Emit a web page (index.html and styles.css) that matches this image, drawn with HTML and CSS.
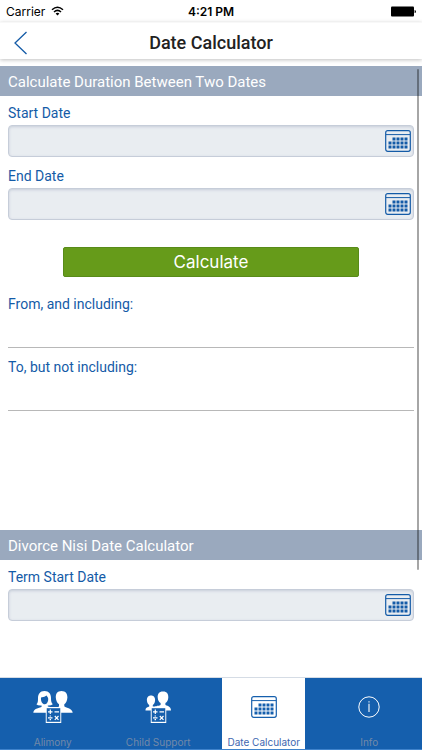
FILE: index.html
```html
<!DOCTYPE html>
<html lang="en">
<head>
    <meta charset="utf-8">
    <meta name="viewport" content="width=device-width, initial-scale=1">
    <title>Date Calculator</title>
    <link rel="stylesheet" href="styles.css">
</head>
<body>
    <!-- shared icons -->
    <svg class="sprite" aria-hidden="true">
        <symbol id="calendar" viewBox="0 0 26 22">
            <rect x="0.7" y="0.7" width="24.6" height="20.6" rx="2" fill="none" stroke="currentColor" stroke-width="1.2"/>
            <path d="M1 4.6H25" stroke="currentColor" stroke-width="1"/>
            <path d="M7.5 9H23M3.5 13H23M3.5 17H23" stroke="currentColor" stroke-width="3" stroke-dasharray="3 1"/>
        </symbol>
        <symbol id="calc" viewBox="0 0 16 16">
            <rect x="0.6" y="0.6" width="14.8" height="14.8" fill="#155fad" stroke="#fff" stroke-width="1.2"/>
            <path d="M2.5 4.8H7M4.8 2.5V7M9 4.8H13.5M2.5 10.8H7M9.3 9L13 12.8M13 9L9.3 12.8" fill="none" stroke="#fff" stroke-width="1.2"/>
            <path d="M4.1 8.4H5.5V9.6H4.1ZM4.1 12H5.5V13.2H4.1Z" fill="#fff"/>
        </symbol>
    </svg>

    <div class="app">
        <div class="status">
            <div class="carrier">
                Carrier
                <svg width="13" height="10" viewBox="0 0 13 10" aria-hidden="true">
                    <path d="M1 3.8Q6.5 -1.4 12 3.8M3 6Q6.5 2.8 10 6" fill="none" stroke="#000" stroke-width="1.5"/>
                    <path d="M4.6 7.5Q6.5 5.9 8.4 7.5L6.5 9.6Z"/>
                </svg>
            </div>
            <div class="time">4:21 PM</div>
            <svg class="battery" width="25" height="11" viewBox="0 0 25 11" aria-hidden="true">
                <rect x="0" y="0.5" width="23" height="10" rx="1"/>
                <path d="M23.6 4Q25 4 25 5.5Q25 7 23.6 7Z"/>
            </svg>
        </div>

        <header class="header">
            <button class="back" type="button" aria-label="Back">
                <svg width="14" height="24" viewBox="0 0 14 24" aria-hidden="true">
                    <path d="M12.5 1L1 12L12.5 23" fill="none" stroke="currentColor" stroke-width="1.3"/>
                </svg>
            </button>
            <h1>Date Calculator</h1>
        </header>

        <main class="content">
            <form class="duration">
                <h2>Calculate Duration Between Two Dates</h2>
                <div class="field">
                    <label for="startDate">Start Date</label>
                    <div class="date-box">
                        <input type="text" id="startDate" name="startDate">
                        <svg class="calendar"><use href="#calendar"/></svg>
                    </div>
                </div>
                <div class="field">
                    <label for="endDate">End Date</label>
                    <div class="date-box">
                        <input type="text" id="endDate" name="endDate">
                        <svg class="calendar"><use href="#calendar"/></svg>
                    </div>
                </div>
                <button class="calculate" type="button">Calculate</button>
                <div class="field">
                    <label for="fromResult">From, and including:</label>
                    <input class="result" type="text" id="fromResult" readonly>
                </div>
                <div class="field">
                    <label for="toResult">To, but not including:</label>
                    <input class="result" type="text" id="toResult" readonly>
                </div>
            </form>

            <form class="nisi">
                <h2>Divorce Nisi Date Calculator</h2>
                <div class="field">
                    <label for="termDate">Term Start Date</label>
                    <div class="date-box">
                        <input type="text" id="termDate" name="termDate">
                        <svg class="calendar"><use href="#calendar"/></svg>
                    </div>
                </div>
            </form>
            <div class="scrollbar"></div>
        </main>

        <nav class="tabs">
            <a class="tab" href="#alimony">
                <svg width="40" height="34" viewBox="0 0 40 34" aria-hidden="true">
                    <path fill="#fff" fill-rule="evenodd" d="M11.5 1C6.8 1 5 4.5 5 8C5 11 5 13 3.4 14.2Q5 15.8 8.6 15.4V16.8C7.5 18.2 0.5 18 0.3 22.8H22V18L14.8 16.6V15.4Q18 15.6 19.8 14.2C18.2 12.6 18 11 18 8C18 4 16 1 11.5 1ZM8 7.4Q12 7 13.6 5.4Q15.4 7.4 15.2 10C14.8 12.8 13.4 14.2 11.7 14.2C9.6 14.2 7.6 11.5 8 7.4Z"/>
                    <path fill="#fff" d="M28.5 1C24.4 1 22.6 3.8 22.8 7.5C23 11 24.3 13 26 14.2V16.2C25.4 17.8 21 17.4 18.5 19V22.8H39.7C39.4 17.8 32 18 31.3 16.2V14.2C33 13 34.2 11 34.4 7.5C34.5 3.8 32.6 1 28.5 1Z"/>
                    <use href="#calc" x="12.5" y="17" width="16" height="16"/>
                </svg>
                <span>Alimony</span>
            </a>
            <a class="tab" href="#child-support">
                <svg width="40" height="34" viewBox="0 0 40 34" aria-hidden="true">
                    <path fill="#fff" d="M13 5.5C10 5.5 8.7 7.7 8.9 10.3C9.1 12.8 9.9 14 11.2 15V16.5C10 17.5 7.5 17 7.5 20.6H18V16.5H14.8V15C16.1 14 16.9 12.8 17.1 10.3C17.2 7.7 16 5.5 13 5.5Z"/>
                    <path fill="#fff" d="M25 1.5C20.8 1.5 19.5 4.2 19.7 7.5C19.9 10.5 21 12 22.6 13V14.8C22 16 17 15.5 16 18V20.6H33C33 15.8 28.2 16 27.4 14.8V13C29 12 30.1 10.5 30.3 7.5C30.5 4.2 29.2 1.5 25 1.5Z"/>
                    <use href="#calc" x="12.5" y="17" width="16" height="16"/>
                </svg>
                <span>Child Support</span>
            </a>
            <a class="tab active" href="#date-calculator" aria-current="page">
                <svg class="calendar" aria-hidden="true"><use href="#calendar"/></svg>
                <span>Date Calculator</span>
            </a>
            <a class="tab" href="#info">
                <svg width="22" height="22" viewBox="0 0 22 22" aria-hidden="true">
                    <circle cx="11" cy="11" r="10.2" fill="none" stroke="#fff" stroke-width="1"/>
                    <path d="M11 7.8V16M11 5.2V6.6" stroke="#fff" stroke-width="1.1"/>
                </svg>
                <span>Info</span>
            </a>
        </nav>
    </div>
</body>
</html>
```

FILE: styles.css
```css
* {
    box-sizing: border-box;
}
body {
    margin: 0;
    font-family: Roboto, Arial, sans-serif;
    color: #145ba7;
    background: #fff;
}
h1, h2 {
    margin: 0;
}
button, input {
    font-family: inherit;
}
.sprite {
    display: none;
}
.app {
    min-height: 100vh;
    display: flex;
    flex-direction: column;
}

/* status bar */
.status {
    height: 22px;
    padding: 0 6px;
    display: grid;
    grid-template-columns: 1fr auto 1fr;
    align-items: center;
    font-family: Inter, Arial, sans-serif;
    font-size: 12px;
    color: #000;
}
.carrier {
    display: flex;
    align-items: center;
    gap: 6px;
}
.time {
    font-weight: 600;
}
.battery {
    justify-self: end;
}

/* title bar */
.header {
    height: 37px;
    padding: 0 14px;
    display: grid;
    grid-template-columns: 1fr auto 1fr;
    align-items: center;
    border-top: 1px solid #f8f8f8;
    box-shadow: 0 1px 4px rgba(0, 0, 0, 0.25);
}
.header h1 {
    font-size: 18px;
    font-weight: 500;
    line-height: 24px;
    padding-top: 4px;
    color: #222;
}
.back {
    justify-self: start;
    display: flex;
    padding: 4px 0 0;
    border: 0;
    background: none;
    color: #145ba7;
}

.content {
    flex: 1;
    position: relative;
    padding-top: 7px;
}
.content h2 {
    height: 30px;
    padding: 0 8px;
    font-size: 15px;
    font-weight: 400;
    line-height: 32px;
    color: #fff;
    background: #9aa9be;
}
.duration {
    min-height: 464px;
    display: flex;
    flex-direction: column;
}
.field {
    display: flex;
    flex-direction: column;
    gap: 3px;
    padding: 8px 8px 2px;
}
.field label {
    font-size: 14px;
    line-height: 18px;
}
.date-box {
    height: 32px;
    display: flex;
    align-items: center;
    padding-right: 2px;
    border: 1px solid #c6cdd9;
    border-radius: 4px;
    background: #e9edf1;
    box-shadow: inset 0 1px 3px #c6cdd9;
}
.date-box input {
    flex: 1;
    min-width: 0;
    height: 30px;
    padding: 0 8px;
    border: 0;
    background: none;
    font-size: 14px;
}
.calendar {
    width: 26px;
    height: 22px;
}
.calculate {
    width: 70%;
    height: 30px;
    margin: 25px auto 10px;
    border: 1px solid #588b19;
    border-radius: 2px;
    background: #669b1a;
    color: #fff;
    font-family: Inter, Arial, sans-serif;
    font-size: 17px;
}
.result {
    height: 32px;
    padding: 0;
    border: 0;
    border-bottom: 1px solid #b8b8b8;
    background: none;
    font-size: 14px;
}
.scrollbar {
    position: absolute;
    top: 10px;
    right: 3px;
    width: 2px;
    height: 81%;
    border-radius: 1px;
    background: rgba(0, 0, 0, 0.35);
}

/* bottom tabs */
.tabs {
    height: 73px;
    display: flex;
    justify-content: space-around;
    border-top: 1px solid #d5dce5;
    border-bottom: 1px solid #3f83cc;
    background: #155fad;
}
.tab {
    width: 83px;
    display: grid;
    grid-template-rows: 58px 12px;
    align-items: center;
    justify-items: center;
    color: #7389a8;
    font-family: Inter, Arial, sans-serif;
    font-size: 10px;
    line-height: 12px;
    text-decoration: none;
    white-space: nowrap;
}
.tab.active {
    background: #fff;
    color: #3e67b0;
}
.tab.active .calendar {
    color: #155fad;
}
```
